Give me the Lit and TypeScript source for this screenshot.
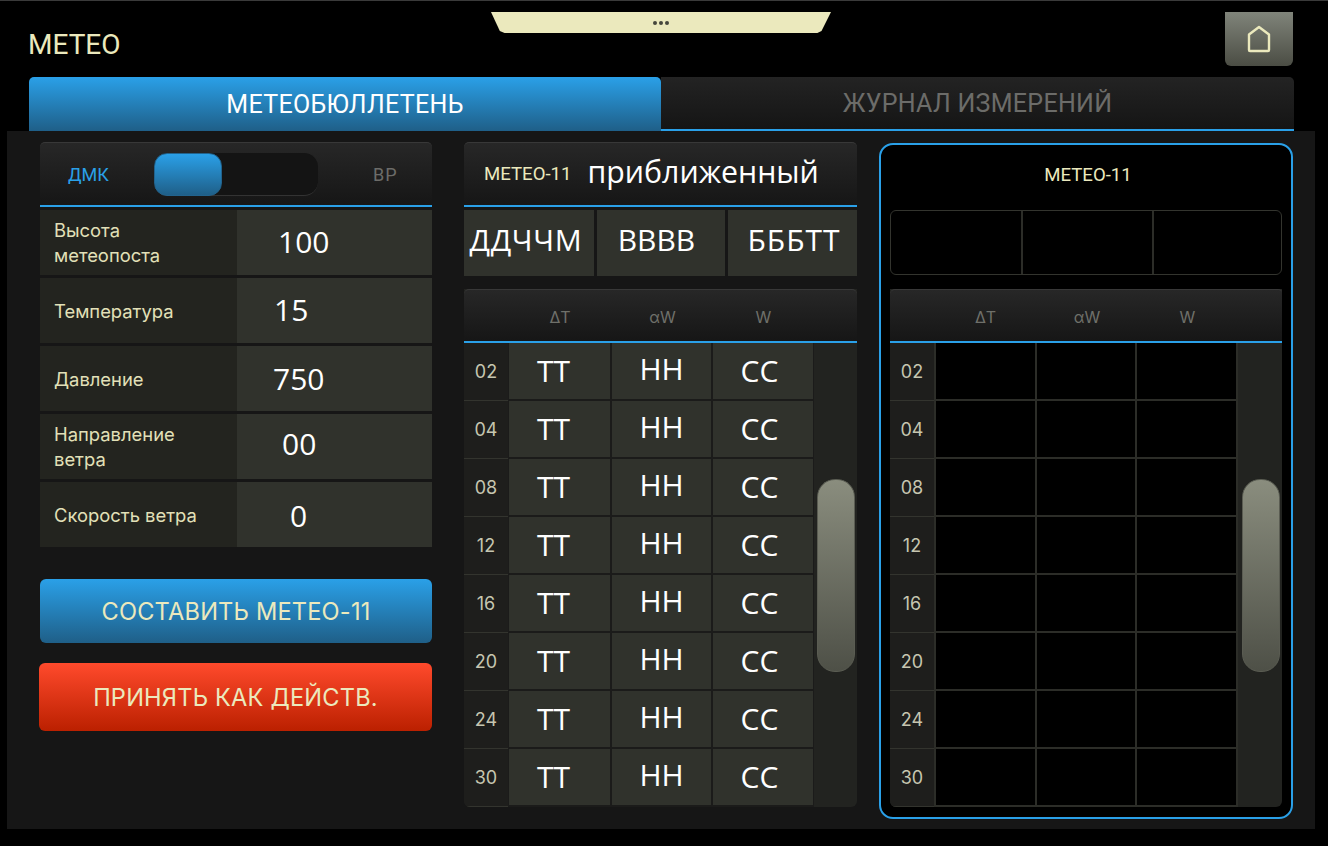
import { LitElement, html, css } from "lit";
import { customElement } from "lit/decorators.js";

const ROWS = ["02", "04", "08", "12", "16", "20", "24", "30"];
const PARAMS = [
  { label: "Высота метеопоста", value: "100", offset: 41, lift: 2 },
  { label: "Температура", value: "15", offset: 37, lift: 2 },
  { label: "Давление", value: "750", offset: 36, lift: 0 },
  { label: "Направление ветра", value: "00", offset: 45, lift: 6 },
  { label: "Скорость ветра", value: "0", offset: 53, lift: -2 },
];

@customElement("app-root")
export class AppRoot extends LitElement {
  static styles = css`
    :host { display: block; width: 1328px; height: 846px; background: #000; overflow: hidden; font-family: Roboto, sans-serif; }
    .top-line { height: 1px; background: #3a3a3a; }
    .header { height: 76px; box-sizing: border-box; padding: 11px 35px 0 29px; display: grid; grid-template-columns: 462px 340px 1fr; align-items: start; }
    .title { font-size: 28px; color: #ebe9bd; line-height: 32px; margin-top: 17px; margin-left: -1px; }
    .handle { height: 21px; background: #ebe9bd; clip-path: polygon(0 0, 100% 0, 97.2% 90%, 96% 100%, 4% 100%, 2.6% 90%); display: flex; justify-content: center; align-items: center; gap: 2px; }
    .handle i { width: 4px; height: 4px; border-radius: 50%; background: #45463c; }
    .home { justify-self: end; width: 68px; height: 54px; box-sizing: border-box; border-radius: 0 0 6px 6px; background: linear-gradient(#80847a, #4b4d44); display: flex; align-items: center; justify-content: center; }
    .tabs { display: grid; grid-template-columns: 632px 633px; margin-left: 29px; height: 54px; }
    .tab { display: flex; align-items: center; justify-content: center; font-size: 25px; letter-spacing: 0.3px; box-sizing: border-box; }
    .tab.on { color: #fff; background: linear-gradient(#2aa0e8, #1f5f88); border-radius: 5px 5px 0 0; }
    .tab.off { color: #6c6c69; background: linear-gradient(#232323, #151515); border-radius: 0 5px 0 0; border-bottom: 2px solid #2aa0e8; }
    .panel { margin: 0 13px 0 7px; height: 698px; box-sizing: border-box; background: #161616; padding: 11px 22px 11px 33px; display: grid; grid-template-columns: 392px 393px 414px; column-gap: 0; }
    .col-mid { margin-left: 32px; width: 393px; }
    .col-right { margin-left: 54px; box-sizing: border-box; width: 414px; height: 676px; margin-top: 1px; border: 2px solid #2aa0e8; border-radius: 14px; background: #000; padding: 0 9px; }
    .bar { height: 65px; box-sizing: border-box; border-top: 1px solid #383838; border-bottom: 2px solid #2aa0e8; border-radius: 5px 5px 0 0; background: linear-gradient(#272727, #161616); display: flex; align-items: center; }
    .mode { font-size: 18px; width: 114px; padding-left: 28px; box-sizing: border-box; color: #2aa0e8; }
    .track { width: 164px; height: 43px; border-radius: 14px; background: #141414; border-bottom: 1px solid #333; box-sizing: border-box; }
    .knob { width: 68px; height: 43px; box-sizing: border-box; border-radius: 13px; background: linear-gradient(#2aa0e8, #1f5f88); border: 1px solid #22638d; }
    .mode.vr { width: auto; color: #6c6c69; padding-left: 55px; letter-spacing: 1px; }
    .params { margin-top: 3px; display: grid; grid-auto-rows: 65px; gap: 3px; }
    .param { display: grid; grid-template-columns: 197px 195px; background: #23241f; }
    .param .label { align-self: center; padding: 0 14px; font: 18.4px/25px Inter, sans-serif; color: #e2e0b8; padding-top: 1px; }
    .param .val { background: #30322c; display: flex; align-items: center; font: 30px "Open Sans", sans-serif; color: #fff; }
    .action { display: flex; align-items: center; justify-content: center; font: 23.6px Inter, sans-serif; color: #ebe9bd; border-radius: 6px; letter-spacing: 0.2px; }
    .action.blue { height: 64px; margin-top: 32px; background: linear-gradient(#2aa0e8, #1f5f88); }
    .action.red { height: 68px; margin-top: 20px; margin-left: -1px; background: linear-gradient(#ff4a2c, #bb2000); }
    .m11 { font-size: 18.6px; color: #ebe9bd; }
    .bar .m11 { margin-left: 20px; }
    .kind { font: 30.3px "Open Sans", sans-serif; color: #fff; margin-left: 16px; line-height: 1; padding-bottom: 3px; }
    .codes { display: grid; grid-template-columns: 130px 128px 129px; gap: 3px; height: 66px; margin-top: 3px; }
    .codes div { background: #30322c; display: flex; align-items: center; justify-content: center; font: 30px "Open Sans", sans-serif; color: #fff; padding-bottom: 8px; box-sizing: border-box; }
    .codes .a { letter-spacing: 0.7px; padding-right: 6px; }
    .codes .b { padding-right: 9px; }
    .codes .c { letter-spacing: 1px; padding-left: 3px; }
    .right-title { height: 65px; box-sizing: border-box; padding: 0 0 6px 4px; display: flex; align-items: center; justify-content: center; }
    .right-codes { display: grid; grid-template-columns: 130px 131px 1fr; height: 65px; box-sizing: border-box; border: 1px solid #33342e; border-radius: 6px; }
    .right-codes div + div { border-left: 2px solid #2c2d28; }
    .table { margin-top: 13px; display: grid; height: 518px; grid-template-rows: 54px 1fr; border-radius: 0 0 6px 6px; background: #222320; overflow: hidden; }
    .col-right .table { margin-top: 14px; }
    .thead { display: grid; box-sizing: border-box; padding-top: 2px; border-top: 1px solid #383838; border-bottom: 2px solid #2aa0e8; border-radius: 5px 5px 0 0; background: linear-gradient(#272727, #161616); color: #6f706a; font: 16px Inter, sans-serif; align-items: center; justify-items: center; }
    .tbody { display: grid; grid-template-rows: repeat(8, 1fr); }
    .g-mid { grid-template-columns: 44px 104px 101px 101px 43px; }
    .g-right { grid-template-columns: 44px 103px 100px 101px 45px; }
    .rownum { background: #1e1e1c; display: flex; align-items: center; justify-content: center; font: 18px Inter, sans-serif; color: #c6c6b0; border-bottom: 1px solid #33342e; padding-bottom: 1px; }
    .cell { box-sizing: border-box; display: flex; align-items: center; justify-content: center; font: 30px "Open Sans", sans-serif; color: #fff; background: #30322c; border-right: 2px solid #1b1b1a; border-bottom: 2px solid #1b1b1a; }
    .cell.c1 { border-left: 1px solid #1b1b1a; padding: 0 12px 2px 0; }
    .cell.c2 { padding-bottom: 6px; }
    .cell.c3 { padding: 0 7px 2px 0; border-right-width: 1px; }
    .cell.empty { background: #000; border-right: 2px solid #2c2d28; border-bottom: 2px solid #2c2d28; }
    .cell.empty.c1 { border-left: 2px solid #2c2d28; }
    .scroll { grid-column: 5; grid-row: 1 / -1; padding-top: 136px; }
    .g-mid .scroll { padding-left: 3px; }
    .g-right .scroll { padding-left: 4px; }
    .thumb { width: 38px; height: 193px; box-sizing: border-box; border-radius: 18px; background: linear-gradient(#8a8d7e, #4e5047); border: 1px solid #5a5c52; }
  `;

  private tableTpl(filled: boolean) {
    const g = filled ? "g-mid" : "g-right";
    return html`
      <div class="table">
        <div class="thead ${g}"><span></span><span>ΔT</span><span>αW</span><span>W</span></div>
        <div class="tbody ${g}">
          ${ROWS.map(
            (r, i) => html`
              <div class="rownum" style="grid-row:${i + 1};grid-column:1">${r}</div>
              <div class="cell c1 ${filled ? "" : "empty"}" style="grid-row:${i + 1};grid-column:2">${filled ? "ТТ" : ""}</div>
              <div class="cell c2 ${filled ? "" : "empty"}" style="grid-row:${i + 1};grid-column:3">${filled ? "НН" : ""}</div>
              <div class="cell c3 ${filled ? "" : "empty"}" style="grid-row:${i + 1};grid-column:4">${filled ? "СС" : ""}</div>
            `
          )}
          <div class="scroll"><div class="thumb"></div></div>
        </div>
      </div>
    `;
  }

  render() {
    return html`
      <div class="top-line"></div>
      <div class="header">
        <div class="title">МЕТЕО</div>
        <div class="handle"><i></i><i></i><i></i></div>
        <div class="home">
          <svg width="24" height="28" viewBox="0 0 24 28" fill="none" stroke="#ebe9bd" stroke-width="2.4" stroke-linejoin="round">
            <path d="M12 2 L22 9.5 V25 a1 1 0 0 1 -1 1 H3 a1 1 0 0 1 -1 -1 V9.5 Z" />
          </svg>
        </div>
      </div>
      <div class="tabs">
        <div class="tab on">МЕТЕОБЮЛЛЕТЕНЬ</div>
        <div class="tab off">ЖУРНАЛ ИЗМЕРЕНИЙ</div>
      </div>
      <div class="panel">
        <div class="col-left">
          <div class="bar">
            <div class="mode">ДМК</div>
            <div class="track"><div class="knob"></div></div>
            <div class="mode vr">ВР</div>
          </div>
          <div class="params">
            ${PARAMS.map(
              (p) => html`
                <div class="param">
                  <div class="label">${p.label}</div>
                  <div class="val" style="padding:${p.lift < 0 ? -p.lift : 0}px 0 ${p.lift > 0 ? p.lift : 0}px ${p.offset}px">${p.value}</div>
                </div>
              `
            )}
          </div>
          <div class="action blue">СОСТАВИТЬ МЕТЕО-11</div>
          <div class="action red">ПРИНЯТЬ КАК ДЕЙСТВ.</div>
        </div>
        <div class="col-mid">
          <div class="bar">
            <span class="m11">МЕТЕО-11</span>
            <span class="kind">приближенный</span>
          </div>
          <div class="codes"><div class="a">ДДЧЧМ</div><div class="b">ВВВВ</div><div class="c">БББТТ</div></div>
          ${this.tableTpl(true)}
        </div>
        <div class="col-right">
          <div class="right-title"><span class="m11">МЕТЕО-11</span></div>
          <div class="right-codes"><div></div><div></div><div></div></div>
          ${this.tableTpl(false)}
        </div>
      </div>
    `;
  }
}
